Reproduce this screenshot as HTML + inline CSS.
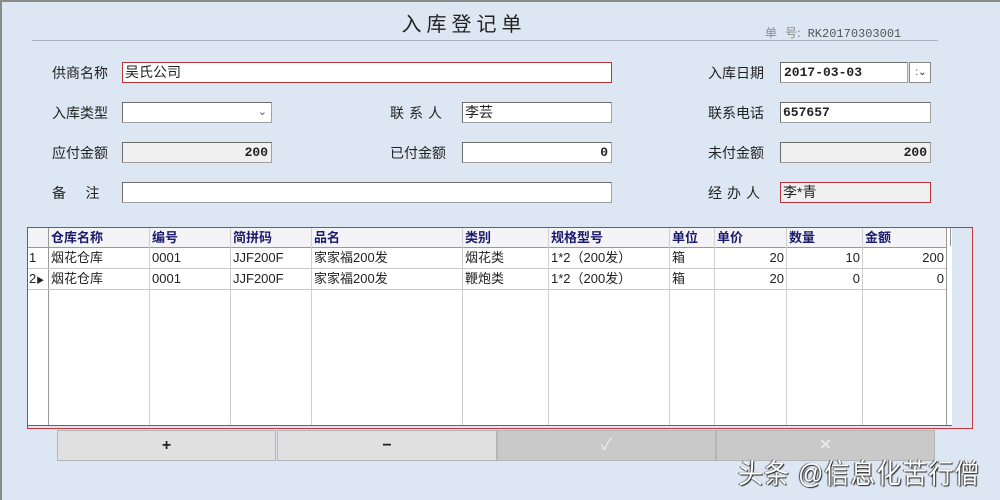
<!DOCTYPE html>
<html><head><meta charset="utf-8"><style>
*{margin:0;padding:0;box-sizing:border-box}
body{width:1000px;height:500px;background:#dde7f4;position:relative;overflow:hidden;font-family:"Liberation Sans","Noto Sans CJK SC",sans-serif;font-size:14px;color:#222}
.a{position:absolute}
.lbl{position:absolute;font-size:14px;color:#222;line-height:20px}
.in{position:absolute;background:#fff;border:1px solid #a0a0a0;border-top-color:#6d6d6d;border-left-color:#6d6d6d;height:21px;font-size:14px;line-height:19px;padding-left:2px}
.red{border:1px solid #b7333c}
.gr{background:#f0f0f0}
.num{text-align:right;padding-right:3px;font-weight:bold;font-family:"Liberation Mono","Noto Sans CJK SC",monospace;font-size:13px}
.c{position:absolute;top:0;height:100%;border-left:1px solid #d0d0d0}
.hd{position:absolute;font-weight:bold;color:#1a1a6e;font-size:13px;line-height:19px}
.cell{position:absolute;font-size:13px;line-height:20px;color:#222}
.btn{position:absolute;top:430px;height:31px;background:#e0e0e0;border:1px solid #b5b5b5;text-align:center;line-height:29px;font-weight:bold;font-size:16px}
</style></head><body>
<div class="a" style="left:0;top:0;width:2px;height:500px;background:#8a8a8a"></div>
<div class="a" style="left:0;top:0;width:1000px;height:2px;background:#8a8a8a"></div>
<div class="a" style="left:0;top:8px;width:928px;text-align:center;font-size:20px;letter-spacing:5px;color:#222">入库登记单</div>
<div class="a" style="left:765px;top:24px;font-size:12px;color:#8a8a8a;font-family:'Liberation Mono','Noto Sans CJK SC',monospace"><span style="font-family:'Noto Sans CJK SC'">单&nbsp;&nbsp;&nbsp;号:</span> <span style="color:#555">RK20170303001</span></div>
<div class="a" style="left:32px;top:40px;width:906px;height:1px;background:#aab2bd"></div>

<div class="lbl" style="left:52px;top:63px">供商名称</div>
<div class="in red" style="left:122px;top:62px;width:490px">吴氏公司</div>
<div class="lbl" style="left:708px;top:63px">入库日期</div>
<div class="in num" style="left:780px;top:62px;width:128px;text-align:left;padding-left:3px">2017-03-03</div>
<div class="in" style="left:909px;top:62px;width:22px;font-size:10px;text-align:center;border-color:#888">:⌄</div>

<div class="lbl" style="left:52px;top:103px">入库类型</div>
<div class="in" style="left:122px;top:102px;width:150px"><span style="position:absolute;right:4px;top:0;font-size:11px;color:#555">⌄</span></div>
<div class="lbl" style="left:390px;top:103px;letter-spacing:5px">联系人</div>
<div class="in" style="left:462px;top:102px;width:150px">李芸</div>
<div class="lbl" style="left:708px;top:103px">联系电话</div>
<div class="in num" style="left:780px;top:102px;width:151px;text-align:left">657657</div>

<div class="lbl" style="left:52px;top:143px">应付金额</div>
<div class="in gr num" style="left:122px;top:142px;width:150px">200</div>
<div class="lbl" style="left:390px;top:143px">已付金额</div>
<div class="in num" style="left:462px;top:142px;width:150px">0</div>
<div class="lbl" style="left:708px;top:143px">未付金额</div>
<div class="in gr num" style="left:780px;top:142px;width:151px">200</div>

<div class="lbl" style="left:52px;top:183px;word-spacing:0">备&nbsp;&nbsp;&nbsp;&nbsp;&nbsp;注</div>
<div class="in" style="left:122px;top:182px;width:490px"></div>
<div class="lbl" style="left:708px;top:183px;letter-spacing:5px">经办人</div>
<div class="in red gr" style="left:780px;top:182px;width:151px">李*青</div>

<div class="a" style="left:27px;top:227px;width:946px;height:202px;border:1px solid #c8363e"></div>
<div class="a" style="left:28px;top:228px;width:924px;height:197px;background:#fff">
  <div class="a" style="left:0;top:0;width:918px;height:20px;background:#f4f4f6;border-bottom:1px solid #999"></div>
  <div class="c" style="left:20px;border-color:#999"></div>
  <div class="c" style="left:121px"></div><div class="c" style="left:202px"></div><div class="c" style="left:283px"></div><div class="c" style="left:434px"></div><div class="c" style="left:520px"></div><div class="c" style="left:641px"></div><div class="c" style="left:686px"></div><div class="c" style="left:758px"></div><div class="c" style="left:834px"></div><div class="c" style="left:918px;border-color:#999"></div><div class="c" style="left:922px;border-color:#999;height:18px"></div>
  <div class="a" style="left:0;top:40px;width:918px;height:1px;background:#c8c8c8"></div>
  <div class="a" style="left:0;top:61px;width:918px;height:1px;background:#c8c8c8"></div>
  <div class="hd" style="left:23px;top:0">仓库名称</div><div class="hd" style="left:124px;top:0">编号</div><div class="hd" style="left:205px;top:0">简拼码</div><div class="hd" style="left:286px;top:0">品名</div><div class="hd" style="left:437px;top:0">类别</div><div class="hd" style="left:523px;top:0">规格型号</div><div class="hd" style="left:644px;top:0">单位</div><div class="hd" style="left:689px;top:0">单价</div><div class="hd" style="left:761px;top:0">数量</div><div class="hd" style="left:837px;top:0">金额</div>
  <div class="cell" style="left:1px;top:20px">1</div><div class="cell" style="left:23px;top:20px">烟花仓库</div><div class="cell" style="left:124px;top:20px">0001</div><div class="cell" style="left:205px;top:20px">JJF200F</div><div class="cell" style="left:286px;top:20px">家家福200发</div><div class="cell" style="left:437px;top:20px">烟花类</div><div class="cell" style="left:523px;top:20px">1*2（200发）</div><div class="cell" style="left:644px;top:20px">箱</div><div class="cell" style="left:686px;top:20px;width:70px;text-align:right">20</div><div class="cell" style="left:758px;top:20px;width:74px;text-align:right">10</div><div class="cell" style="left:834px;top:20px;width:82px;text-align:right">200</div>
  <div class="cell" style="left:1px;top:41px">2<span style="font-size:8px">▶</span></div><div class="cell" style="left:23px;top:41px">烟花仓库</div><div class="cell" style="left:124px;top:41px">0001</div><div class="cell" style="left:205px;top:41px">JJF200F</div><div class="cell" style="left:286px;top:41px">家家福200发</div><div class="cell" style="left:437px;top:41px">鞭炮类</div><div class="cell" style="left:523px;top:41px">1*2（200发）</div><div class="cell" style="left:644px;top:41px">箱</div><div class="cell" style="left:686px;top:41px;width:70px;text-align:right">20</div><div class="cell" style="left:758px;top:41px;width:74px;text-align:right">0</div><div class="cell" style="left:834px;top:41px;width:82px;text-align:right">0</div>
</div>
<div class="a" style="left:27px;top:425px;width:925px;height:1px;background:#666"></div>

<div class="btn" style="left:57px;width:219px">+</div>
<div class="btn" style="left:277px;width:220px">−</div>
<div class="btn" style="left:497px;width:219px;background:#c9c9c9;color:#eee;font-weight:normal">✓</div>
<div class="btn" style="left:716px;width:219px;background:#c9c9c9;color:#eee;font-weight:normal">✕</div>

<div class="a" style="left:738px;top:452px;font-size:25px;letter-spacing:1px;color:#fff;text-shadow:1px 1px 1px #222,-1px 0 1px #444;white-space:nowrap;transform:scaleY(1.1);transform-origin:left top">头条 @信息化苦行僧</div>
</body></html>
